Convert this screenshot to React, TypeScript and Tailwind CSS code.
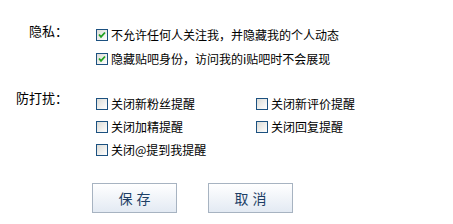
import React from "react";

function Box({ checked }: { checked?: boolean }) {
  return (
    <span className="w-[12px] h-[12px] shrink-0 border border-[#1c5180] bg-gradient-to-br from-[#dcdcd7] to-[#ffffff] flex items-center justify-center">
      {checked && (
        <svg width="8" height="8" viewBox="0 0 8 8">
          <path d="M1 3.5 L3 5.8 L7 1.5" stroke="#21a121" strokeWidth="1.8" fill="none" />
        </svg>
      )}
    </span>
  );
}

function Item({ checked, text, w }: { checked?: boolean; text: string; w?: string }) {
  return (
    <label className={`flex items-center gap-[3px] ${w ?? ""}`}>
      <Box checked={checked} />
      <span className="text-[12px] leading-[14px] text-black whitespace-nowrap">{text}</span>
    </label>
  );
}

export default function App() {
  return (
    <div
      className="w-[453px] h-[224px] bg-white pt-[23px]"
      style={{ fontFamily: '"Noto Sans CJK SC", "Noto Sans", sans-serif' }}
    >
      <div className="flex">
        <div className="w-[68px] text-right text-[13px] leading-[16px] text-black">隐私：</div>
        <div className="ml-[28px] flex flex-col">
          <div className="h-[24px] flex items-center">
            <Item checked text="不允许任何人关注我，并隐藏我的个人动态" />
          </div>
          <div className="h-[24px] flex items-center">
            <Item checked text="隐藏贴吧身份，访问我的i贴吧时不会展现" />
          </div>
        </div>
      </div>
      <div className="flex mt-[21px]">
        <div className="w-[68px] text-right text-[13px] leading-[16px] text-black -mt-[2px]">防打扰：</div>
        <div className="ml-[28px] flex flex-col">
          <div className="h-[23px] flex items-center">
            <Item text="关闭新粉丝提醒" w="w-[160px]" />
            <Item text="关闭新评价提醒" />
          </div>
          <div className="h-[23px] flex items-center">
            <Item text="关闭加精提醒" w="w-[160px]" />
            <Item text="关闭回复提醒" />
          </div>
          <div className="h-[23px] flex items-center">
            <Item text="关闭@提到我提醒" />
          </div>
        </div>
      </div>
      <div className="flex gap-[31px] ml-[92px] mt-[22px]">
        <button className="w-[85px] h-[30px] border border-[#a7b3c1] bg-gradient-to-b from-[#ffffff] to-[#e3eaf3] text-[14px] tracking-[4px] pl-[4px] text-[#1d3f66]">
          保存
        </button>
        <button className="w-[85px] h-[30px] border border-[#a7b3c1] bg-gradient-to-b from-[#ffffff] to-[#e3eaf3] text-[14px] tracking-[4px] pl-[4px] text-[#1d3f66]">
          取消
        </button>
      </div>
    </div>
  );
}
